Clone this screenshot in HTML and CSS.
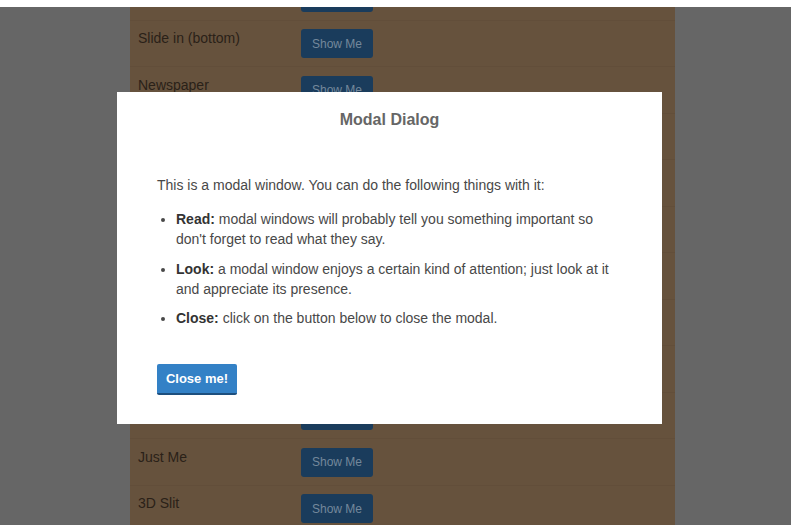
FILE: index.html
```html
<!DOCTYPE html>
<html>
<head>
<meta charset="utf-8">
<link rel="stylesheet" href="styles.css">
</head>
<body>
<div class="page">
  <div class="panel">
    <div class="list">
      <div class="row"><span class="name">Slide in (right)</span><button class="show">Show Me</button></div>
      <div class="row"><span class="name">Slide in (bottom)</span><button class="show">Show Me</button></div>
      <div class="row"><span class="name">Newspaper</span><button class="show">Show Me</button></div>
      <div class="row"><span class="name">Fall</span><button class="show">Show Me</button></div>
      <div class="row"><span class="name">Side Fall</span><button class="show">Show Me</button></div>
      <div class="row"><span class="name">Sticky Up</span><button class="show">Show Me</button></div>
      <div class="row"><span class="name">3D Flip (horizontal)</span><button class="show">Show Me</button></div>
      <div class="row"><span class="name">3D Flip (vertical)</span><button class="show">Show Me</button></div>
      <div class="row"><span class="name">3D Sign</span><button class="show">Show Me</button></div>
      <div class="row"><span class="name">Super Scaled</span><button class="show">Show Me</button></div>
      <div class="row"><span class="name">Just Me</span><button class="show">Show Me</button></div>
      <div class="row"><span class="name">3D Slit</span><button class="show">Show Me</button></div>
    </div>
  </div>
</div>
<div class="modal">
  <h3 class="title">Modal Dialog</h3>
  <div class="content">
    <p class="intro">This is a modal window. You can do the following things with it:</p>
    <ul class="items">
      <li><strong>Read:</strong> modal windows will probably tell you something important so don't forget to read what they say.</li>
      <li><strong>Look:</strong> a modal window enjoys a certain kind of attention; just look at it and appreciate its presence.</li>
      <li><strong>Close:</strong> click on the button below to close the modal.</li>
    </ul>
    <button class="close">Close me!</button>
  </div>
</div>
</body>
</html>
```
FILE: styles.css
```css
html, body {
  margin: 0;
  padding: 0;
  height: 100%;
  overflow: hidden;
}
body {
  background: #ffffff;
  font-family: "Liberation Sans", Arial, sans-serif;
}
.page {
  margin-top: 7px;
  height: 518px;
  background: #666666;
  overflow: hidden;
}
.panel {
  margin-left: 130px;
  width: 545px;
  height: 100%;
  background: #66523d;
  overflow: hidden;
}
.list {
  margin-top: -33px;
}
.row {
  height: 46.5px;
  box-sizing: border-box;
  padding: 7.5px 8px 0 8px;
  display: flex;
  align-items: flex-start;
  border-bottom: 1px solid #624e3a;
}
.name {
  width: 163px;
  font-size: 14px;
  line-height: 20px;
  color: #2a2118;
}
.show {
  margin-top: 1px;
  width: 72px;
  height: 29px;
  border: none;
  border-radius: 3px;
  background: #1a3c5c;
  color: #74889b;
  font-family: "Liberation Sans", Arial, sans-serif;
  font-size: 12px;
  padding: 0;
}
.modal {
  position: absolute;
  left: 117px;
  top: 92px;
  width: 545px;
  height: 332px;
  background: #ffffff;
  box-sizing: border-box;
}
.title {
  margin: 0;
  padding-top: 19px;
  text-align: center;
  font-size: 16px;
  line-height: 18px;
  font-weight: bold;
  color: #666666;
}
.content {
  padding: 0 40px;
  margin-top: 46px;
  color: #484848;
  font-size: 14px;
  line-height: 20px;
}
.intro {
  margin: 0 0 14px 0;
}
.items {
  margin: 0;
  padding-left: 19px;
}
.items li {
  margin-bottom: 9.5px;
}
.items strong {
  color: #333333;
}
.close {
  margin-top: 26px;
  width: 80px;
  height: 31px;
  border: none;
  border-bottom: 2px solid #1d4f7e;
  border-radius: 2px;
  background: #3381c6;
  color: #ffffff;
  font-family: "Liberation Sans", Arial, sans-serif;
  font-weight: bold;
  font-size: 13px;
  padding: 0;
}
```
